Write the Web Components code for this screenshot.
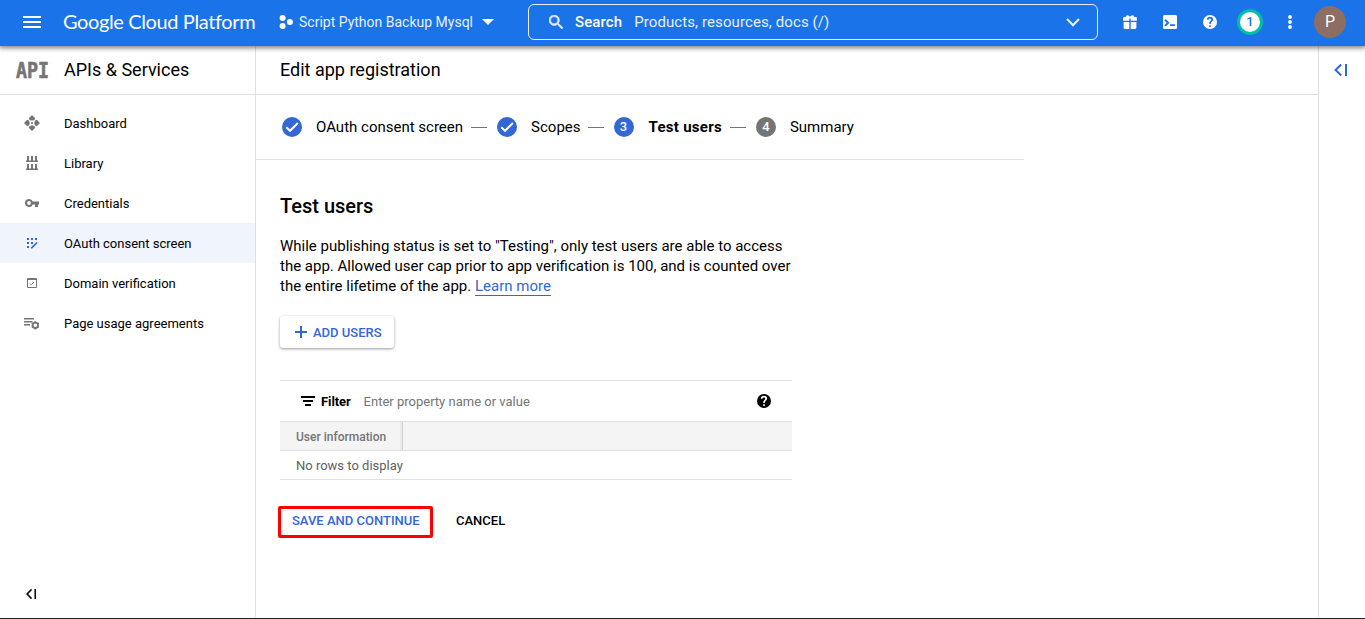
<!DOCTYPE html>
<html lang="en">
<head>
<meta charset="utf-8">
<title>Edit app registration</title>
<style>
html,body{margin:0;height:100%;background:#fff;overflow:hidden}
body{font-family:Roboto,"Liberation Sans",sans-serif;color:#000;font-size:13px}
</style>
</head>
<body>
<console-app></console-app>
<script>
const ICONS = {
  menu: ['0 0 18 12', '<path d="M0 0h18v2H0zM0 5h18v2H0zM0 10h18v2H0z"/>'],
  project: ['0 0 14 14', '<circle cx="3.6" cy="3" r="3"/><circle cx="10.9" cy="6.9" r="3"/><circle cx="3.6" cy="11" r="3"/>'],
  drop: ['0 0 12 6', '<path d="M0 0h12L6 6z"/>'],
  search: ['3 3 17.5 17.5', '<path d="M15.5 14h-.79l-.28-.27A6.47 6.47 0 0 0 16 9.5 6.5 6.5 0 1 0 9.5 16c1.61 0 3.09-.59 4.23-1.57l.27.28v.79l5 4.99L20.49 19zm-6 0a4.5 4.5 0 1 1 0-9 4.5 4.5 0 0 1 0 9z" stroke="currentColor" stroke-width=".7"/>'],
  down: ['0 0 14 9', '<path d="M1 1l6 6.2L13 1" fill="none" stroke="currentColor" stroke-width="2"/>'],
  gift: ['0 0 14 14', '<path d="M1.200 2h1.600Q2.600.2 4.400.2 6 .2 7 1.700 8 .2 9.600.2q1.800 0 1.600 1.800h1.600Q14 2 14 3.200v2.600H7.700V3.500H6.300v2.300H0V3.200Q0 2 1.200 2zM.6 7h5.700v7H2a1.400 1.400 0 0 1-1.400-1.400zM7.700 7h5.700v5.600A1.400 1.400 0 0 1 12 14H7.700z"/>'],
  shell: ['0 0 14 14', '<path fill-rule="evenodd" d="M1.500 0h11A1.500 1.500 0 0 1 14 1.500v11a1.500 1.500 0 0 1-1.500 1.500h-11A1.500 1.500 0 0 1 0 12.500v-11A1.500 1.500 0 0 1 1.500 0zM1.300 5.200l2.400 2.600-2.400 2.500 1.500 1.300L6.400 7.800 2.800 4zM7 9.200v1.800h5V9.200z"/>'],
  help: ['2 2 20 20', '<path d="M12 2a10 10 0 1 0 0 20 10 10 0 0 0 0-20zm1.200 17h-2.400v-2.400h2.400zm2.100-8c-.8 1.200-2.100 1.700-2.100 3.900h-2.400c0-3.100 1.300-3.800 2.200-4.800 1.300-1.400.8-3.200-1-3.200-1.200 0-2 .9-2 2H7.500a4.500 4.500 0 0 1 9 0c0 .8-.5 1.300-1.200 2.100z"/>'],
  more: ['0 0 4 14', '<circle cx="2" cy="2" r="1.900"/><circle cx="2" cy="7" r="1.900"/><circle cx="2" cy="12" r="1.900"/>'],
  panel: ['0 0 13 12', '<path d="M7.200.5L1.500 6l5.700 5.500" fill="none" stroke="currentColor" stroke-width="2"/><path d="M11 0h2v12h-2z"/>'],
  dashboard: ['0 0 16 16', '<path d="M8 0l3 3v1.300L9.300 5.600H6.700L5 4.300V3zM8 16l3-3v-1.300l-1.700-1.300H6.700L5 11.700V13zM0 8l3-3h1.300l1.300 1.700v2.600L4.300 11H3zM16 8l-3-3h-1.300l-1.300 1.700v2.600l1.300 1.700H13z"/><circle cx="8" cy="8" r="1.100"/>'],
  library: ['0 0 12 14', '<path d="M0 4.600h12V6H0zM0 12.600h12V14H0zM1 0h2v5H1zM5 0h2v5H5zM9 0h2v5H9zM1 8h2v5H1zM5 8h2v5H5zM9 8h2v5H9z"/>'],
  key: ['0 0 14 8', '<path fill-rule="evenodd" d="M4 0a4 4 0 0 1 3.800 2.600H14v3h-1V8h-3V5.500H7.700A4 4 0 1 1 4 0zm0 2.100a1.900 1.900 0 1 0 0 3.800 1.900 1.900 0 0 0 0-3.800z"/>'],
  consent: ['0 0 11 11', '<path d="M0 0h2v2H0zM4 0h2v2H4zM8 0h2v2H8zM0 4h2v2H0zM4 4h2v2H4zM0 8h2v2H0zM9.600 4l1 1-5.300 5.400H4V9.200z"/>'],
  domain: ['0 0 11 11', '<path fill-rule="evenodd" d="M.8 0h9.400l.8.800v9.400l-.8.800H.8l-.8-.8V.8zM1.100 2.300v7.600h8.800V2.300z"/><path d="M3.100 6l1.600 1.600L8 4.300" fill="none" stroke="currentColor" stroke-width="1.100"/>'],
  agreement: ['0 0 16 13', '<path d="M0 1h10v1.600H0zM0 4h8.500v1.600H0zM0 7h6v1.600H0z"/><circle cx="11.300" cy="8.300" r="2.700" fill="none" stroke="currentColor" stroke-width="1.800"/><path d="M10.400 4.200h1.800v1h-1.800zM10.400 11.400h1.800v1h-1.800zM7.300 6.700l.8-1.300 1 .6-.8 1.300zM13.500 10.400l.8-1.200 1 .5-.8 1.300zM7.300 9.800l1-.6.800 1.300-1 .6zM13.500 6.100l1-.6.800 1.300-1 .6z"/>'],
  check: ['0 0 20 20', '<path d="M4.300 10.200l3.700 3.600L15.900 6" fill="none" stroke="currentColor" stroke-width="1.900"/>'],
  plus: ['0 0 12 12', '<path d="M5 0h2v5h5v2H7v5H5V7H0V5h5z"/>'],
  filter: ['0 0 14 10', '<path d="M0 0h14v2H0zM2 4h10v2H2zM4 8h6v2H4z"/>']
};
function define(name, html, hook) {
  const t = document.createElement('template');
  t.innerHTML = '<style>*{box-sizing:border-box}</style>' + html;
  customElements.define(name, class extends HTMLElement {
    connectedCallback() {
      if (this.shadowRoot) return;
      const root = this.attachShadow({mode: 'open'});
      root.append(t.content.cloneNode(true));
      if (hook) hook(this, root);
    }
  });
}

define('g-icon', `<style>:host{display:block;flex:none}div{width:100%;height:100%}svg{display:block;width:100%;height:100%;fill:currentColor}</style><div></div>`, (el, root) => {
  const [box, body] = ICONS[el.getAttribute('name')];
  root.querySelector('div').innerHTML = '<svg preserveAspectRatio="none" viewBox="' + box + '" aria-hidden="true">' + body + '</svg>';
  el.style.width = el.getAttribute('w') + 'px';
  el.style.height = el.getAttribute('h') + 'px';
});

define('top-bar', `<style>
:host{display:flex;align-items:center;height:46px;box-sizing:border-box;padding:0 15px 2px 23px;background:#1a73e8;color:#fff;box-shadow:0 1px 5px 1px rgba(0,0,0,.5);position:relative;z-index:2;white-space:nowrap}
.brand{margin-left:22px;width:216px;font:400 20px/42px Lato,sans-serif;letter-spacing:-.38px;padding-bottom:2px}
.project{display:flex;align-items:center;gap:6px;width:215px;font-size:14px;color:#e8f0fe;margin-right:34px}
.project g-icon{color:#fff}
.project .arrow{margin-left:3px}
.search{display:flex;align-items:center;width:570px;height:36px;border:1px solid #e8f0fe;border-radius:6px;padding:0 17px 0 20px;font-size:15px;letter-spacing:.1px;color:#e8f0fe}
.search b{font-weight:500;margin:0 12px 0 12px;color:#fff}
.search span{flex:1}
.tools{display:grid;grid-template-columns:repeat(6,40px);place-items:center;margin-left:12px}
.count{width:26px;height:26px;border:3px solid #00bfa5;border-radius:50%;background:#fff;color:#1a73e8;font-weight:500;line-height:20px;text-align:center}
.avatar{width:32px;height:32px;border-radius:50%;background:#8d6e63;font-size:16px;line-height:32px;text-align:center}
</style>
<g-icon name="menu" w="18" h="12"></g-icon><div class="brand">Google Cloud Platform</div>
<div class="project"><g-icon name="project" w="14" h="14"></g-icon><span>Script Python Backup Mysql</span><g-icon class="arrow" name="drop" w="12" h="6"></g-icon></div>
<div class="search"><g-icon name="search" w="14" h="14"></g-icon><b>Search</b><span>Products, resources, docs (/)</span><g-icon name="down" w="14" h="9"></g-icon></div>
<div class="tools"><g-icon name="gift" w="14" h="14"></g-icon><g-icon name="shell" w="14" h="14"></g-icon><g-icon name="help" w="14" h="14"></g-icon><div class="count">1</div><g-icon name="more" w="4" h="14"></g-icon><div class="avatar">P</div></div>`);

define('nav-item', `<style>
:host{display:flex;align-items:center;height:40px}
:host([active]){background:#eff4fd}
.i{width:64px;display:flex;justify-content:center;color:#757575}
:host([active]) .i{color:#3367d6}
</style><div class="i"><slot name="icon"></slot></div><slot></slot>`);

define('side-nav', `<style>
:host{display:flex;flex-direction:column;box-sizing:border-box;width:256px;border-right:1px solid #e0e0e0;flex:none}
header{display:flex;align-items:center;height:49px;border-bottom:1px solid #e0e0e0;font-size:18px;padding:0 0 1px 16px}
.api{width:48px;height:20px;flex:none;display:block;overflow:visible;fill:#757575;stroke:#757575;stroke-width:.6px;font:700 21px "DejaVu Sans Mono",monospace}
nav{flex:1;padding-top:8px}
footer{height:49px;padding:20px 0 0 26px}
</style>
<header><svg class="api" viewBox="0 0 48 20"><text x="0" y="18" textLength="33" lengthAdjust="spacingAndGlyphs">API</text></svg><span>APIs &amp; Services</span></header>
<nav>
<nav-item><g-icon slot="icon" name="dashboard" w="16" h="16"></g-icon>Dashboard</nav-item>
<nav-item><g-icon slot="icon" name="library" w="12" h="14"></g-icon>Library</nav-item>
<nav-item><g-icon slot="icon" name="key" w="14" h="8"></g-icon>Credentials</nav-item>
<nav-item active><g-icon slot="icon" name="consent" w="11" h="11"></g-icon>OAuth consent screen</nav-item>
<nav-item><g-icon slot="icon" name="domain" w="10" h="10"></g-icon>Domain verification</nav-item>
<nav-item><g-icon slot="icon" name="agreement" w="16" h="13"></g-icon>Page usage agreements</nav-item>
</nav><footer><g-icon name="panel" w="10" h="10"></g-icon></footer>`);

define('step-item', `<style>
:host{display:flex;align-items:center;font-size:15px;white-space:nowrap}
.dot{width:20px;height:20px;border-radius:50%;background:#3367d6;color:#fff;font-size:13px;font-weight:500;line-height:20px;text-align:center;margin-right:14px;flex:none}
:host([todo]) .dot{background:#757575}
:host([current]) .dot{margin:0 15px 0 -1px}
:host([current]) .label{font-weight:700;letter-spacing:.28px}
</style><div class="dot"><slot name="mark"></slot></div><span class="label"><slot></slot></span>`);

define('step-bar', `<style>
:host{display:flex;align-items:center;box-sizing:border-box;width:768px;height:65px;border-bottom:1px solid #e0e0e0;padding-left:26px}
i{height:1px;width:16px;background:#757575;margin:1px 10px 0 8px;flex:none}
</style>
<step-item><g-icon slot="mark" name="check" w="20" h="20"></g-icon>OAuth consent screen</step-item><i></i>
<step-item><g-icon slot="mark" name="check" w="20" h="20"></g-icon>Scopes</step-item><i style="margin:1px 11px 0 7px"></i>
<step-item current><span slot="mark">3</span>Test users</step-item><i></i>
<step-item todo><span slot="mark">4</span>Summary</step-item>`);

define('user-table', `<style>
:host{display:block;width:512px;border-top:1px solid #e0e0e0;margin-top:32px}
.filter{display:flex;align-items:center;height:40px;padding:0 21px}
.filter b{font-weight:700;margin:0 13px 0 6px;letter-spacing:-.1px}
.filter span{color:#757575;flex:1}
.head{display:flex;height:30px;border:1px solid #e0e0e0;border-width:1px 0;background:#f4f4f4;color:#757575;font-size:12px;font-weight:500;line-height:30px}
.head div{width:123px;padding-left:16px;border-right:1px solid #d0d0d0;white-space:nowrap;box-shadow:inset -2px 0 #ebebeb}
.row{height:29px;border-bottom:1px solid #e0e0e0;padding-left:16px;line-height:29px;color:#616161}
</style>
<div class="filter"><g-icon name="filter" w="14" h="10"></g-icon><b>Filter</b><span>Enter property name or value</span><g-icon name="help" w="14" h="14"></g-icon></div>
<div class="head"><div>User information</div></div><div class="row">No rows to display</div>`);

define('main-panel', `<style>
:host{display:block;flex:1}
h1{margin:0;height:49px;border-bottom:1px solid #e0e0e0;font:400 18px/48px Roboto,sans-serif;padding-left:24px}
section{padding:34px 24px 0;width:768px}
h2{margin:0 0 17px;font:500 20px/25px Roboto,sans-serif}
p{margin:0;font-size:15px;line-height:20px;white-space:nowrap}
a{color:#3367d6;border-bottom:1px solid #3367d6}
.add{display:flex;align-items:center;gap:6px;width:114px;height:32px;margin-top:20px;padding-left:15px;border-radius:3px;box-shadow:0 1px 3px rgba(0,0,0,.4);color:#3367d6;font-weight:500}
.actions{display:flex;align-items:center;margin:26px 0 0 -2px;font-weight:500}
.save{width:155px;height:32px;border:3px solid #f00;border-radius:2px;color:#3367d6;line-height:24px;padding-left:11px;white-space:nowrap}
.cancel{margin-left:23px;line-height:24px;padding-bottom:2px}
</style>
<h1>Edit app registration</h1><step-bar></step-bar>
<section><h2>Test users</h2>
<p>While publishing status is set to "Testing", only test users are able to access<br>the app. Allowed user cap prior to app verification is 100, and is counted over<br>the entire lifetime of the app. <a>Learn more</a></p>
<div class="add"><g-icon name="plus" w="12" h="12"></g-icon><span>ADD USERS</span></div>
<user-table></user-table>
<div class="actions"><div class="save">SAVE AND CONTINUE</div><div class="cancel">CANCEL</div></div></section>`);

define('info-rail', `<style>:host{display:block;box-sizing:border-box;width:47px;border-left:1px solid #e0e0e0;padding:18px 0 0 15px;color:#3367d6;flex:none}</style><g-icon name="panel" w="13" h="12"></g-icon>`);

define('console-app', `<style>
:host{display:flex;flex-direction:column;height:100vh;border-bottom:1px solid #202124;box-sizing:border-box}
.body{display:flex;flex:1;min-height:0}
</style><top-bar></top-bar><div class="body"><side-nav></side-nav><main-panel></main-panel><info-rail></info-rail></div>`);
</script>
</body>
</html>
